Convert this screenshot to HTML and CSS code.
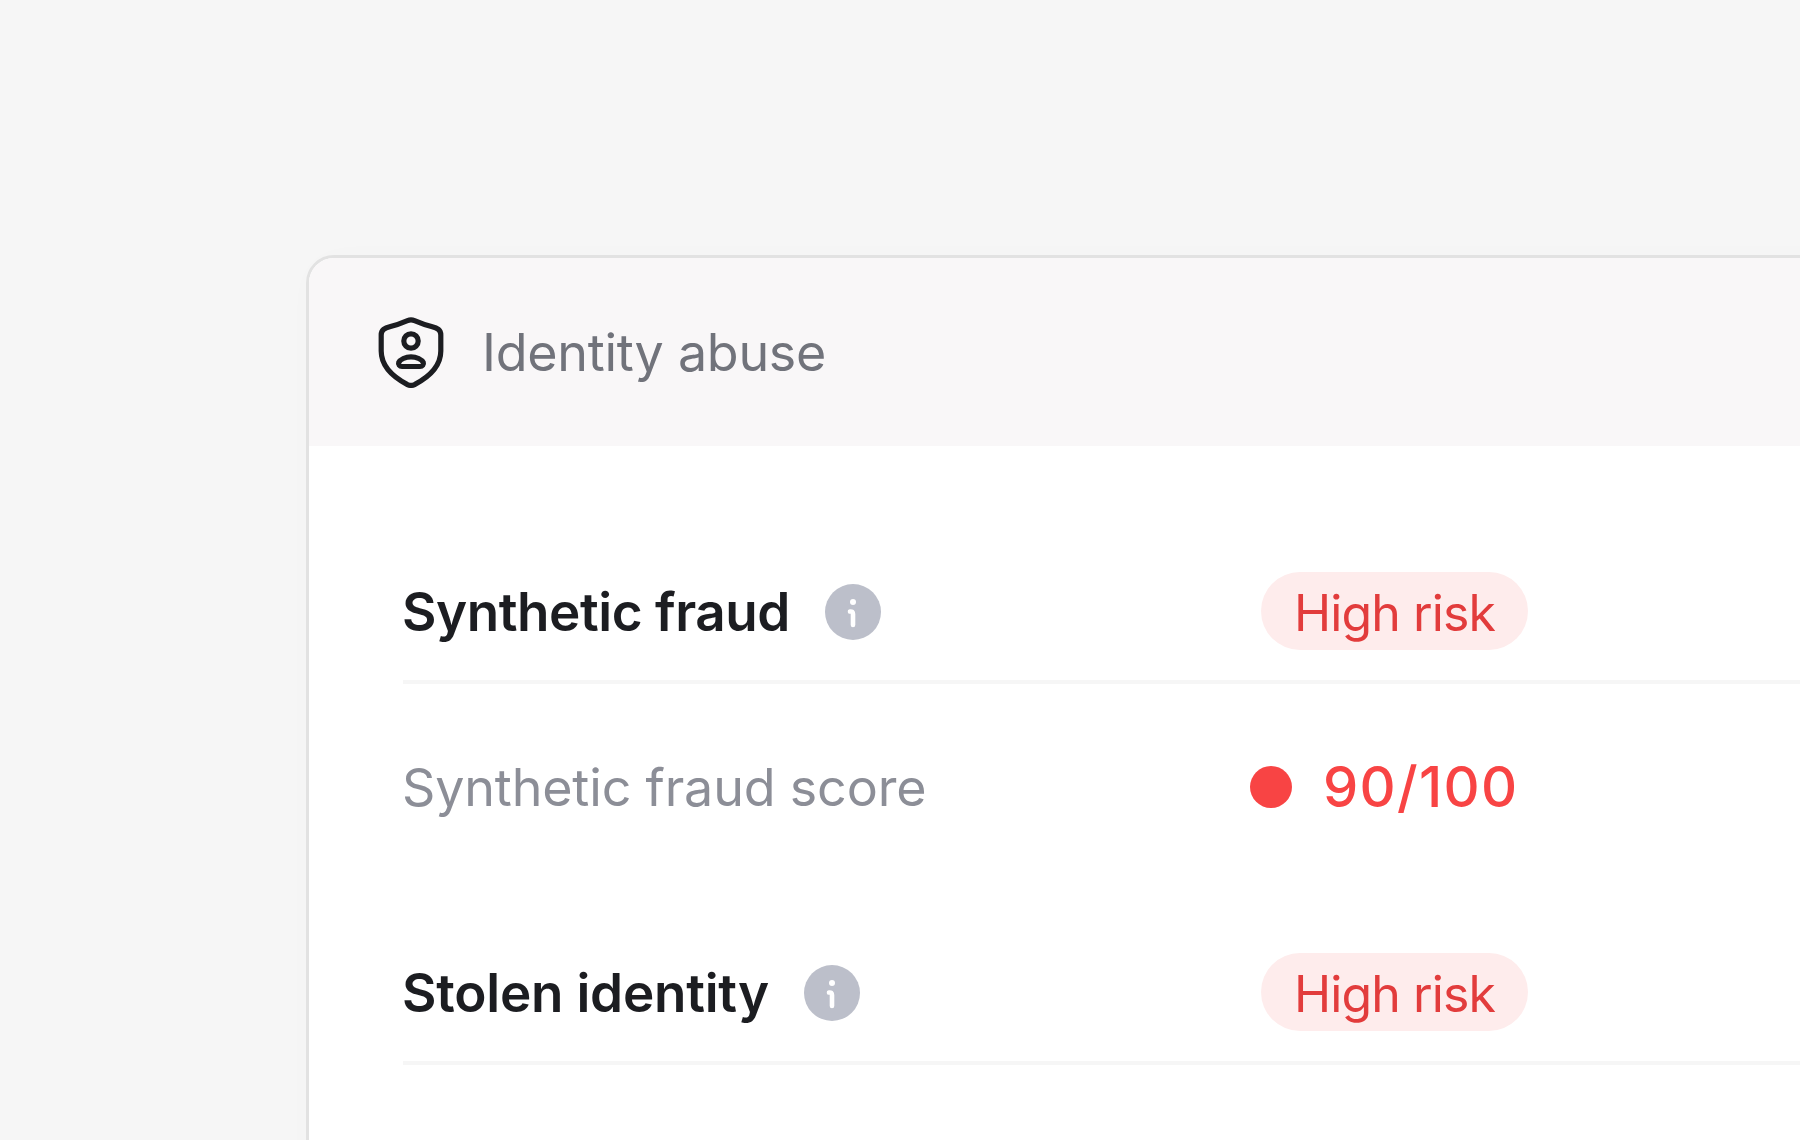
FILE: index.html
```html
<!DOCTYPE html>
<html lang="en">
<head>
<meta charset="utf-8">
<title>Identity abuse</title>
<link rel="stylesheet" href="styles.css">
</head>
<body>
<main class="stage">
  <section class="card">
    <header class="card-head">
      <svg class="shield" viewBox="0 0 66 71" fill="none" stroke="#1c1d21" stroke-width="5.200" stroke-linecap="round" stroke-linejoin="round" aria-hidden="true">
        <path d="M29.500 3.600 C31.800 2.600 34.200 2.600 36.500 3.600 C41 5.500 46 7.600 53.500 9.600 C59.500 11.200 62.800 12.500 62.800 18 L62.800 34 C62.800 49 51 60 36.500 67.600 C34.200 68.700 31.800 68.700 29.500 67.600 C15 60 3.200 49 3.200 34 L3.200 18 C3.200 12.500 6.500 11.200 12.500 9.600 C20 7.600 25 5.500 29.500 3.600 Z"/>
        <circle cx="33" cy="24" r="7.200"/>
        <path d="M33 39.800 C38.500 39.800 43.800 42.500 45.300 45.500 C46 47.500 44.500 49.500 42 49.500 L24 49.500 C21.500 49.500 20 47.500 20.700 45.500 C22.200 42.500 27.500 39.800 33 39.800 Z"/>
      </svg>
      <h1 class="card-title">Identity abuse</h1>
    </header>
    <div class="card-body">
      <div class="row row-head">
        <div class="label">
          <h2 class="name">Synthetic fraud</h2>
          <svg class="info" viewBox="0 0 56 56" aria-hidden="true">
            <circle cx="28" cy="28" r="28" fill="#bcbfca"/>
            <circle cx="28" cy="18" r="3" fill="#fff"/>
            <path d="M25 27.500 Q28 27 28 30 V41" fill="none" stroke="#fff" stroke-width="4.600" stroke-linecap="round" stroke-linejoin="round"/>
          </svg>
        </div>
        <span class="pill">High risk</span>
      </div>
      <div class="row row-score">
        <span class="score-label">Synthetic fraud score</span>
        <span class="score"><i class="dot"></i>90/100</span>
      </div>
      <div class="row row-head row-next">
        <div class="label">
          <h2 class="name name-wide">Stolen identity</h2>
          <svg class="info" viewBox="0 0 56 56" aria-hidden="true">
            <circle cx="28" cy="28" r="28" fill="#bcbfca"/>
            <circle cx="28" cy="18" r="3" fill="#fff"/>
            <path d="M25 27.500 Q28 27 28 30 V41" fill="none" stroke="#fff" stroke-width="4.600" stroke-linecap="round" stroke-linejoin="round"/>
          </svg>
        </div>
        <span class="pill">High risk</span>
      </div>
    </div>
  </section>
</main>
</body>
</html>
```
FILE: styles.css
```css
* { box-sizing: border-box; }
html, body { margin: 0; height: 100%; }
body {
  background: #f6f6f6;
  overflow: hidden;
  font-family: "Inter", "Liberation Sans", sans-serif;
}
.stage {
  height: 1140px;
  padding: 255px 0 0 306px;
  overflow: hidden;
}
.card {
  width: 1700px;
  height: 1100px;
  background: #fff;
  border: 3px solid #e2e2e2;
  border-radius: 28px;
  overflow: hidden;
  box-shadow: 0 0 40px rgba(0, 0, 0, .012);
}
.card-head {
  height: 188px;
  padding-left: 69px;
  background: #f9f7f8;
  display: flex;
  align-items: center;
  gap: 38px;
}
.shield { width: 66px; height: 71px; flex: none; }
.card-title {
  margin: 0;
  font-size: 52px;
  font-weight: 400;
  color: #71737b;
  letter-spacing: -.27px;
}
.card-body { padding: 126px 0 0 94px; }
.row {
  display: grid;
  grid-template-columns: 858px auto;
  justify-content: start;
  align-items: center;
}
.row-head {
  height: 112px;
  padding-bottom: 30px;
  border-bottom: 4px solid #f6f6f6;
}
.row-next { margin-top: 63px; }
.label {
  display: flex;
  align-items: center;
  gap: 35px;
  padding-top: 2px;
}
.name {
  margin: 0 0 0 -1px;
  font-size: 53px;
  font-weight: 600;
  color: #1c1d21;
  letter-spacing: -.45px;
}
.name-wide { letter-spacing: -.22px; }
.info { width: 56px; height: 56px; flex: none; }
.pill {
  width: 267px;
  height: 78px;
  padding-top: 3px;
  border-radius: 39px;
  background: #feecec;
  color: #e23c3c;
  font-size: 50px;
  letter-spacing: -.9px;
  display: flex;
  align-items: center;
  justify-content: center;
}
.row-score { height: 206px; grid-template-columns: 847px auto; }
.score-label {
  margin-left: -1px;
  font-size: 52px;
  color: #8c8e97;
  letter-spacing: -.17px;
}
.score {
  display: flex;
  align-items: center;
  gap: 31px;
  font-size: 56px;
  font-weight: 500;
  color: #f84444;
  letter-spacing: 1.3px;
}
.dot {
  width: 42px;
  height: 42px;
  border-radius: 50%;
  background: #f84444;
}
```
